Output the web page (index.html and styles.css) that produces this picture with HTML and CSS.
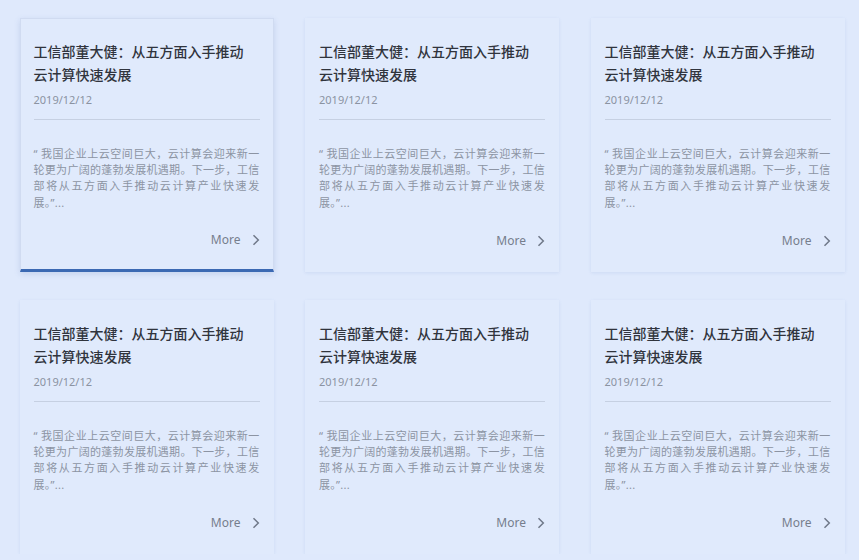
FILE: index.html
```html
<!DOCTYPE html>
<html lang="zh-CN">
<head>
<meta charset="utf-8">
<title>News</title>
<link rel="stylesheet" href="styles.css">
</head>
<body>
<div class="grid">
  <div class="card active">
    <h3 class="title">工信部董大健：从五方面入手推动云计算快速发展</h3>
    <div class="date">2019/12/12</div>
    <div class="divider"></div>
    <p class="desc">“ 我国企业上云空间巨大，云计算会迎来新一轮更为广阔的蓬勃发展机遇期。下一步，工信部将从五方面入手推动云计算产业快速发展。”...</p>
    <div class="more"><span>More</span><svg width="8" height="12" viewBox="0 0 8 12"><path d="M1.5 1.2 L6.3 6 L1.5 10.8" fill="none" stroke="#6f7888" stroke-width="1.5"/></svg></div>
  </div>
  <div class="card">
    <h3 class="title">工信部董大健：从五方面入手推动云计算快速发展</h3>
    <div class="date">2019/12/12</div>
    <div class="divider"></div>
    <p class="desc">“ 我国企业上云空间巨大，云计算会迎来新一轮更为广阔的蓬勃发展机遇期。下一步，工信部将从五方面入手推动云计算产业快速发展。”...</p>
    <div class="more"><span>More</span><svg width="8" height="12" viewBox="0 0 8 12"><path d="M1.5 1.2 L6.3 6 L1.5 10.8" fill="none" stroke="#6f7888" stroke-width="1.5"/></svg></div>
  </div>
  <div class="card">
    <h3 class="title">工信部董大健：从五方面入手推动云计算快速发展</h3>
    <div class="date">2019/12/12</div>
    <div class="divider"></div>
    <p class="desc">“ 我国企业上云空间巨大，云计算会迎来新一轮更为广阔的蓬勃发展机遇期。下一步，工信部将从五方面入手推动云计算产业快速发展。”...</p>
    <div class="more"><span>More</span><svg width="8" height="12" viewBox="0 0 8 12"><path d="M1.5 1.2 L6.3 6 L1.5 10.8" fill="none" stroke="#6f7888" stroke-width="1.5"/></svg></div>
  </div>
  <div class="card">
    <h3 class="title">工信部董大健：从五方面入手推动云计算快速发展</h3>
    <div class="date">2019/12/12</div>
    <div class="divider"></div>
    <p class="desc">“ 我国企业上云空间巨大，云计算会迎来新一轮更为广阔的蓬勃发展机遇期。下一步，工信部将从五方面入手推动云计算产业快速发展。”...</p>
    <div class="more"><span>More</span><svg width="8" height="12" viewBox="0 0 8 12"><path d="M1.5 1.2 L6.3 6 L1.5 10.8" fill="none" stroke="#6f7888" stroke-width="1.5"/></svg></div>
  </div>
  <div class="card">
    <h3 class="title">工信部董大健：从五方面入手推动云计算快速发展</h3>
    <div class="date">2019/12/12</div>
    <div class="divider"></div>
    <p class="desc">“ 我国企业上云空间巨大，云计算会迎来新一轮更为广阔的蓬勃发展机遇期。下一步，工信部将从五方面入手推动云计算产业快速发展。”...</p>
    <div class="more"><span>More</span><svg width="8" height="12" viewBox="0 0 8 12"><path d="M1.5 1.2 L6.3 6 L1.5 10.8" fill="none" stroke="#6f7888" stroke-width="1.5"/></svg></div>
  </div>
  <div class="card">
    <h3 class="title">工信部董大健：从五方面入手推动云计算快速发展</h3>
    <div class="date">2019/12/12</div>
    <div class="divider"></div>
    <p class="desc">“ 我国企业上云空间巨大，云计算会迎来新一轮更为广阔的蓬勃发展机遇期。下一步，工信部将从五方面入手推动云计算产业快速发展。”...</p>
    <div class="more"><span>More</span><svg width="8" height="12" viewBox="0 0 8 12"><path d="M1.5 1.2 L6.3 6 L1.5 10.8" fill="none" stroke="#6f7888" stroke-width="1.5"/></svg></div>
  </div>
</div>
</body>
</html>
```
FILE: styles.css
```css
html, body {
  margin: 0;
  padding: 0;
  background: #dfe9fc;
  font-family: "Noto Sans", "Noto Sans CJK SC", sans-serif;
}
.grid {
  display: grid;
  grid-template-columns: repeat(3, 254px);
  column-gap: 31.5px;
  row-gap: 28px;
  padding: 18px 0 0 19.5px;
}
.card {
  box-sizing: border-box;
  height: 254px;
  background: #e0eafc;
  padding: 22px 14px 0 14px;
  box-shadow: 0 1px 3px rgba(110, 140, 200, 0.16);
  display: flex;
  flex-direction: column;
}
.card.active {
  border: 1px solid #d0dbf1;
  border-bottom: 3px solid #3b69b3;
  padding: 21px 13px 0 13px;
  box-shadow: 0 2px 6px rgba(90, 120, 180, 0.2);
}
.title {
  margin: 0;
  padding-right: 14px;
  font-size: 14px;
  line-height: 23px;
  font-weight: 500;
  color: #30343d;
}
.date {
  margin-top: 5.5px;
  font-size: 11px;
  line-height: 16px;
  color: #8b93a2;
}
.divider {
  margin-top: 11px;
  height: 1px;
  background: #c6d0e2;
}
.desc {
  margin: 26px 0 0 0;
  font-size: 11px;
  line-height: 16.4px;
  color: #8c94a3;
  text-align: justify;
  letter-spacing: 0.3px;
}
.more {
  margin-top: auto;
  margin-bottom: 23px;
  display: flex;
  justify-content: flex-end;
  align-items: center;
  gap: 11px;
  font-size: 12px;
  line-height: 16px;
  color: #767e8d;
}
.card.active .more {
  margin-bottom: 21px;
}
.more svg {
  display: block;
}
```
